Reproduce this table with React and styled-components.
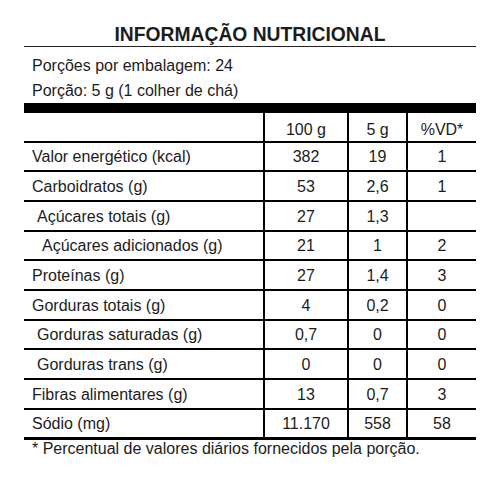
import styled, { createGlobalStyle } from "styled-components";

const GlobalStyle = createGlobalStyle`
  html, body {
    margin: 0;
    padding: 0;
    background: #ffffff;
  }
  body {
    font-family: "Liberation Sans", Arial, sans-serif;
    color: #1c1c1c;
  }
`;

const Page = styled.div`
  width: 500px;
  height: 482px;
  padding: 24px 0 0 24px;
  box-sizing: border-box;
`;

const Label = styled.div`
  width: 452px;
`;

const Title = styled.h1`
  margin: 0;
  font-size: 19.3px;
  line-height: 22px;
  font-weight: 700;
  text-align: center;
  border-bottom: 1.5px solid #222;
`;

const Info = styled.div`
  padding: 6px 0 0 8px;
  font-size: 16px;
  line-height: 25px;
`;

const Bar = styled.div`
  height: 10px;
  background: #000;
`;

const Row = styled.div`
  display: grid;
  grid-template-columns: 239px 84px 59px 1fr;
  height: ${(p) => p.$height}px;
  box-sizing: border-box;
  border-bottom: ${(p) => p.$border}px solid #000;
  font-size: 16px;
`;

const Cell = styled.div`
  display: flex;
  align-items: center;
  justify-content: ${(p) => (p.$name ? "flex-start" : "center")};
  padding: ${(p) => (p.$head ? "6px" : "2px")} 0 0
    ${(p) => (p.$name ? 8 + (p.$indent || 0) : 0)}px;
  border-left: ${(p) => (p.$name ? "none" : "2px solid #000")};
  white-space: nowrap;
`;

const Footnote = styled.div`
  padding-left: 8px;
  font-size: 16px;
  line-height: 18px;
`;

const rows = [
  ["Valor energético (kcal)", 0, "382", "19", "1"],
  ["Carboidratos (g)", 0, "53", "2,6", "1"],
  ["Açúcares totais (g)", 5, "27", "1,3", ""],
  ["Açúcares adicionados (g)", 10, "21", "1", "2"],
  ["Proteínas (g)", 0, "27", "1,4", "3"],
  ["Gorduras totais (g)", 0, "4", "0,2", "0"],
  ["Gorduras saturadas (g)", 5, "0,7", "0", "0"],
  ["Gorduras trans (g)", 5, "0", "0", "0"],
  ["Fibras alimentares (g)", 0, "13", "0,7", "3"],
  ["Sódio (mg)", 0, "11.170", "558", "58"],
];

export default function App() {
  return (
    <>
      <GlobalStyle />
      <Page>
        <Label>
          <Title>INFORMAÇÃO NUTRICIONAL</Title>
          <Info>
            <div>Porções por embalagem: 24</div>
            <div>Porção: 5 g (1 colher de chá)</div>
          </Info>
          <Bar />
          <Row $height={29.5} $border={2}>
            <Cell $name $head />
            <Cell $head>100 g</Cell>
            <Cell $head>5 g</Cell>
            <Cell $head>%VD*</Cell>
          </Row>
          {rows.map(([name, indent, a, b, c], i) => {
            const last = i === rows.length - 1;
            return (
              <Row key={name} $height={last ? 30.5 : 29.7} $border={last ? 3 : 2}>
                <Cell $name $indent={indent}>
                  {name}
                </Cell>
                <Cell>{a}</Cell>
                <Cell>{b}</Cell>
                <Cell>{c}</Cell>
              </Row>
            );
          })}
          <Footnote>* Percentual de valores diários fornecidos pela porção.</Footnote>
        </Label>
      </Page>
    </>
  );
}
